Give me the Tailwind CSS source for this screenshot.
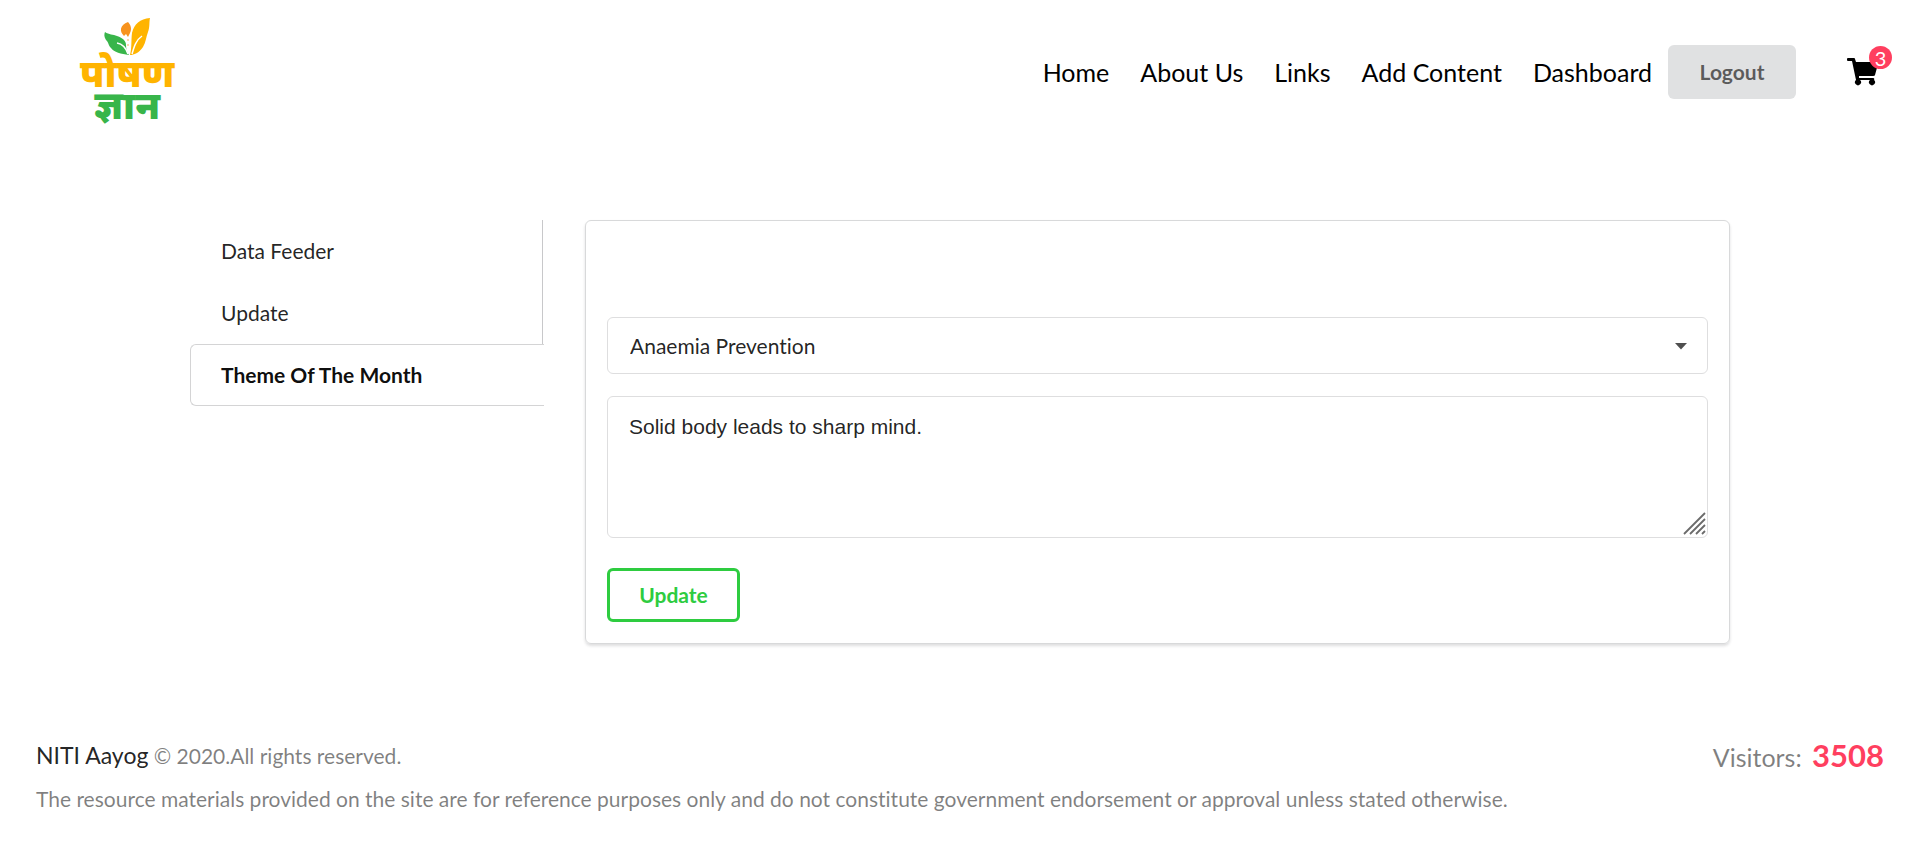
<!DOCTYPE html>
<html lang="en">
<head>
<meta charset="utf-8">
<title>Theme Of The Month</title>
<script src="https://cdn.jsdelivr.net/npm/@tailwindcss/browser@4"></script>
</head>
<body class="bg-white font-['Lato',sans-serif] text-[21px] leading-[30px] text-black/87 [font-variant-ligatures:no-common-ligatures]">
<header class="flex items-start justify-between pt-4 pr-7 pl-20">
  <a href="#" aria-label="पोषण ज्ञान" class="flex flex-col items-center font-['Noto_Sans',sans-serif] font-black">
    <svg class="h-10 w-12" viewBox="0 0 48 40" aria-hidden="true">
      <path fill="#38b54a" d="M2 16C6 19 10 18 14 20C20 22 23 25 23 29C23 33 24 36 26 39C18 38 11 36 8 32C5 29 6 27 3 24C1 21 1 18 2 16Z"/>
      <path fill="none" stroke="#fff" stroke-width="1.500" d="M14 27C20 28 23 32 25 38"/>
      <path fill="#f7931e" d="M25 6C28 9 29 13 27 17L25 21L23 18L21 20C16 15 17 9 25 6Z"/>
      <path fill="#ffb400" d="M47 2C37 3 31 8 29 17C28 24 29 32 27 39C31 39 36 37 40 31C43 26 43 21 45 16C47 11 46 6 47 2Z"/>
      <path fill="none" stroke="#fff" stroke-width="1.500" d="M39 20C33 24 31 31 29 38"/>
      <circle cx="25" cy="24" r="1" fill="#fdc98f"/>
      <circle cx="25" cy="29" r="1" fill="#fdc98f"/>
    </svg>
    <span class="text-[38px] leading-8 text-[#ffb400]">पोषण</span>
    <span class="text-[38px] leading-8 text-[#38b54a]">ज्ञान</span>
  </a>
  <nav class="mt-[29px] flex items-center gap-[31px] text-[25px] text-black" aria-label="Main">
    <a href="#">Home</a>
    <a href="#">About Us</a>
    <a href="#">Links</a>
    <a href="#">Add Content</a>
    <a href="#">Dashboard</a>
    <button type="button" class="-ml-[15px] h-[54px] w-32 rounded-md bg-[#e0e1e2] text-[21px] font-bold text-black/60">Logout</button>
    <a href="#" aria-label="Cart, 3 items" class="relative ml-5 block h-7 w-[45px]">
      <svg class="h-7 w-8" viewBox="0 0 32 28" aria-hidden="true">
        <path d="M1 0H7Q8 0 8 1L9 4H30Q32 4 31 6L28 17Q28 18 26 18H12L12 20H26Q28 20 27 22L27 22A3 3 0 1 1 23 22H13A3 3 0 1 1 9 22L5 3H1Q0 3 0 2V1Q0 0 1 0Z"/>
      </svg>
      <span class="absolute -top-3 right-0 flex size-[23px] items-center justify-center rounded-full bg-[#ff3f5f] text-[20px] leading-none text-white">3</span>
    </a>
  </nav>
</header>

<main class="mx-[190px] mt-[100px] flex items-start gap-[41px]">
  <nav class="w-[354px] shrink-0" aria-label="Dashboard sections">
    <div class="mr-px border-r border-[#c8c8ca]">
      <a href="#" class="flex h-[62px] items-center px-[31px]">Data Feeder</a>
      <a href="#" class="flex h-[62px] items-center px-[31px]">Update</a>
    </div>
    <a href="#" aria-current="page" class="flex h-[62px] items-center rounded-l-md border border-r-0 border-[#d4d4d5] px-[30px] font-bold text-black/95">Theme Of The Month</a>
  </nav>
  <form class="min-w-0 flex-1 rounded-md border border-[#d8d9da] px-[21px] pt-24 pb-[21px] shadow-[0_2px_3px_0_rgba(34,36,38,0.15)]">
    <div class="relative">
      <select aria-label="Theme" class="block h-[57px] w-full appearance-none rounded-md border border-[#dededf] bg-white px-[22px]"><option>Anaemia Prevention</option></select>
      <svg class="pointer-events-none absolute top-[26px] right-[21px] h-[7px] w-3" viewBox="0 0 12 7" aria-hidden="true"><path fill="#4f4f4f" d="M0 0H12L6 6.500Z"/></svg>
    </div>
    <div class="relative mt-[22px]">
      <textarea aria-label="Message" class="block h-[142px] w-full resize-none rounded-md border border-[#dededf] px-[21px] py-[15px] font-['Liberation_Sans',sans-serif]">Solid body leads to sharp mind.</textarea>
      <svg class="pointer-events-none absolute right-px bottom-[2px] size-6" viewBox="0 0 24 24" fill="none" stroke="#6b6b6b" stroke-width="1.800" aria-hidden="true"><path d="M1 22L22 1M7 22L22 7M13 22L22 13M19 22L22 19"/></svg>
    </div>
    <button type="button" class="mt-[30px] block h-[54px] w-[133px] rounded-md border-3 border-[#2ecc40] font-bold text-[#2ecc40]">Update</button>
  </form>
</main>

<footer class="mt-24 px-9 text-black/50">
  <div class="flex items-start justify-between">
    <p><a href="#" class="text-[23px] text-black/87">NITI Aayog</a> © 2020.All rights reserved.</p>
    <p class="text-[25px]">Visitors: <strong class="ml-1 text-[31px] text-[#ff3f5f]">3508</strong></p>
  </div>
  <p class="mt-3">The resource materials provided on the site are for reference purposes only and do not constitute government endorsement or approval unless stated otherwise.</p>
</footer>
</body>
</html>
